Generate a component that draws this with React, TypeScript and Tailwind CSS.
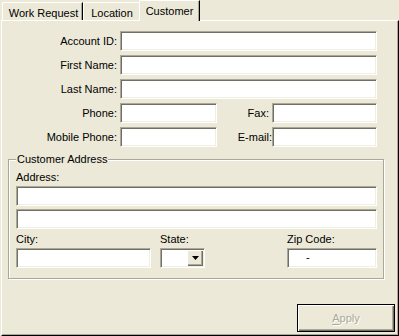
import type { ReactNode } from "react";

const sunken =
  "bg-white border border-t-[#ACA899] border-l-[#ACA899] border-b-white border-r-white shadow-[inset_1px_1px_0_#716F64,inset_-1px_-1px_0_#F1EFE2]";

function Field({ className = "", children }: { className?: string; children?: ReactNode }) {
  return <div className={`h-[20px] ${sunken} ${className}`}>{children}</div>;
}

function Tab({ label, selected, className = "" }: { label: string; selected?: boolean; className?: string }) {
  if (selected) {
    return (
      <div
        className={`relative z-10 h-[21px] -mb-[1px] bg-[#ECE9D8] border-t border-l border-white border-r border-r-black rounded-tl-[2px] shadow-[inset_-1px_0_0_#ACA899] pt-[4px] text-center ${className}`}
      >
        {label}
      </div>
    );
  }
  return (
    <div
      className={`h-[18px] bg-[#ECE9D8] border-t border-l border-white border-r border-r-black rounded-tl-[2px] shadow-[inset_-1px_0_0_#ACA899] pt-[4px] text-center ${className}`}
    >
      {label}
    </div>
  );
}

function Row({ label, children }: { label: string; children: ReactNode }) {
  return (
    <div className="flex items-center">
      <div className="w-[115px] text-right">{label}</div>
      <div className="ml-[3px] flex items-center">{children}</div>
    </div>
  );
}

export default function App() {
  return (
    <div className="w-[399px] h-[336px] bg-[#ECE9D8] text-black text-[11px] leading-[13px] font-['Liberation_Sans',Arial,sans-serif] flex flex-col overflow-hidden">
      {/* Tabs */}
      <div className="flex items-end h-[20px] pl-[2px]">
        <Tab label="Work Request" className="w-[81px] pl-[2px]" />
        <Tab label="Location" className="w-[58px]" />
        <Tab label="Customer" selected className="w-[61px] -ml-[2px]" />
      </div>

      {/* Panel */}
      <div className="ml-[1px] w-[398px] flex-1 flex flex-col border-t border-l border-white border-r border-b border-r-black border-b-black shadow-[inset_-1px_-1px_0_#ACA899]">
        <div className="pt-[10px] flex flex-col gap-[4px]">
          <Row label="Account ID:">
            <Field className="w-[257px]" />
          </Row>
          <Row label="First Name:">
            <Field className="w-[257px]" />
          </Row>
          <Row label="Last Name:">
            <Field className="w-[257px]" />
          </Row>
          <Row label="Phone:">
            <Field className="w-[97px]" />
            <div className="w-[52px] text-right">Fax:</div>
            <Field className="w-[105px] ml-[3px]" />
          </Row>
          <Row label="Mobile Phone:">
            <Field className="w-[97px]" />
            <div className="w-[55px] text-right">E-mail:</div>
            <Field className="w-[105px]" />
          </Row>
        </div>

        {/* Customer Address group */}
        <fieldset className="mt-[6px] ml-[6px] w-[376px] border border-[#ACA899] shadow-[inset_1px_1px_0_#fff,1px_1px_0_#fff] pl-[7px] pr-[6px] pt-[5px] pb-[10px]">
          <legend className="px-[1px] bg-[#ECE9D8] leading-[13px]">Customer Address</legend>
          <div>Address:</div>
          <Field className="w-[361px] mt-[2px]" />
          <Field className="w-[361px] mt-[3px]" />
          <div className="flex mt-[4px]">
            <div className="w-[144px]">
              <div>City:</div>
              <Field className="w-[135px] mt-[2px]" />
            </div>
            <div className="w-[127px]">
              <div>State:</div>
              <Field className="w-[45px] mt-[2px] flex justify-end p-[1px]">
                <div className="w-[16px] h-full bg-[#ECE9D8] shadow-[inset_1px_1px_0_#fff,inset_-1px_-1px_0_#716F64,inset_-2px_-2px_0_#ACA899] flex items-center justify-center">
                  <svg width="7" height="4" viewBox="0 0 7 4">
                    <path d="M0 0h7L3.5 4z" fill="#000" />
                  </svg>
                </div>
              </Field>
            </div>
            <div className="w-[90px]">
              <div>Zip Code:</div>
              <Field className="w-[90px] mt-[2px] pl-[18px] leading-[16px]">-</Field>
            </div>
          </div>
        </fieldset>

        {/* Apply */}
        <div className="mt-auto self-end mr-[3px] mb-[3px] w-[98px] h-[28px] border border-black bg-[#ECE9D8] shadow-[inset_1px_1px_0_#fff,inset_-1px_-1px_0_#716F64,inset_-2px_-2px_0_#ACA899] flex items-center justify-center text-[#ACA899] [text-shadow:1px_1px_0_#fff]">
          <span>
            <span className="underline underline-offset-2">A</span>pply
          </span>
        </div>
      </div>
    </div>
  );
}
